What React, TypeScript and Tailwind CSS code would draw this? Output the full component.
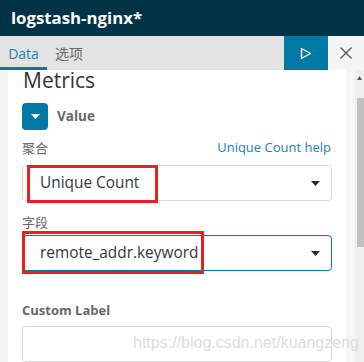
import React from "react";

function Caret() {
  return (
    <svg width="9" height="5" viewBox="0 0 9 5" className="block">
      <path d="M0 0 L9 0 L4.5 5 Z" fill="#2d2d2d" />
    </svg>
  );
}

export default function App() {
  return (
    <div className="relative w-[364px] h-[362px] overflow-hidden bg-[#f5f5f5] flex flex-col font-['Open_Sans',sans-serif]">
      <header className="h-[36px] shrink-0 bg-[#003345] flex items-center px-[11px]">
        <span className="text-white font-bold text-[16.8px] leading-none">logstash-nginx*</span>
      </header>
      <div className="h-[34px] shrink-0 bg-[#e3e3e3] flex">
        <div className="w-[47px] flex items-center justify-center border-b-[3px] border-[#0079a5] pt-[3px] text-[14px] text-[#1b82b0]">
          Data
        </div>
        <div className="flex items-center pl-[8px] text-[14px] text-[#6a6a6a] font-['Noto_Sans_CJK_SC',sans-serif]">
          选项
        </div>
        <div className="flex-1" />
        <div className="w-[44px] bg-[#0079a5] flex items-center justify-center">
          <svg width="12" height="13" viewBox="0 0 12 13">
            <path d="M1.5 1.5 L10.5 6.5 L1.5 11.5 Z" fill="none" stroke="white" strokeWidth="1.4" strokeLinejoin="round" />
          </svg>
        </div>
        <div className="w-[36px] bg-[#f5f5f5] flex items-center justify-center">
          <svg width="12" height="12" viewBox="0 0 12 12">
            <path d="M0.5 0.5 L11.5 11.5 M11.5 0.5 L0.5 11.5" stroke="#555" strokeWidth="1.3" />
          </svg>
        </div>
      </div>
      <div className="flex flex-1">
        <div className="w-[8px]" />
        <main className="w-[338px] bg-white px-[14px] flex flex-col">
          <h2 className="text-[21px] leading-[20px] text-[#333] pl-[1px]">Metrics</h2>
          <div className="mt-[13px] flex items-center gap-[9px]">
            <div className="w-[26px] h-[27px] rounded-[4px] bg-[#0079a5] flex items-center justify-center">
              <svg width="9" height="5" viewBox="0 0 9 5">
                <path d="M0 0 L9 0 L4.5 5 Z" fill="white" />
              </svg>
            </div>
            <span className="text-[13.5px] font-bold text-[#666]">Value</span>
          </div>
          <div className="mt-[10px] h-[16px] flex items-center justify-between">
            <span className="text-[13px] text-[#666] font-['Noto_Sans_CJK_SC',sans-serif]">聚合</span>
            <span className="text-[13px] text-[#1b82b0] pr-[1px]">Unique Count help</span>
          </div>
          <div className="relative mt-[9px] h-[36px] rounded-[4px] border border-[#d9d9d9] flex items-center justify-between pl-[17px] pr-[11px]">
            <span className="text-[15.4px] text-[#343741]">Unique Count</span>
            <Caret />
            <div className="absolute left-[4px] top-[-1px] w-[131px] h-[38px] border-[3px] border-[#ee1c25]" />
          </div>
          <div className="mt-[13px] h-[16px] flex items-center">
            <span className="text-[13px] text-[#666] font-['Noto_Sans_CJK_SC',sans-serif]">字段</span>
          </div>
          <div className="relative mt-[5px] h-[36px] rounded-[4px] border border-[#0079a5] flex items-center justify-between pl-[17px] pr-[11px]">
            <span className="text-[15.4px] text-[#343741]">remote_addr.keyword</span>
            <Caret />
            <div className="absolute left-[-1px] top-[-5px] w-[182px] h-[43px] border-[3px] border-[#ee1c25]" />
          </div>
          <div className="mt-[32px] h-[16px] flex items-center">
            <span className="text-[13px] font-bold text-[#666]">Custom Label</span>
          </div>
          <div className="mt-[7px] h-[36px] rounded-[4px] border border-[#d9d9d9]" />
        </main>
        <div className="w-[9px]" />
        <div className="w-[9px] bg-[#efefef] flex flex-col">
          <div className="h-[28px] flex items-start justify-center pt-[6px]">
            <svg width="5" height="4" viewBox="0 0 5 4">
              <path d="M0 4 L5 4 L2.5 0 Z" fill="#555" />
            </svg>
          </div>
          <div className="ml-[2px] h-[149px] bg-[#c1c1c1]" />
        </div>
      </div>
      <div className="absolute left-[133px] top-[333px] text-[16px] leading-[20px] text-[#d8d8d8]/90 font-['Liberation_Sans',sans-serif] pointer-events-none">
        https://blog.csdn.net/kuangzeng
      </div>
    </div>
  );
}
